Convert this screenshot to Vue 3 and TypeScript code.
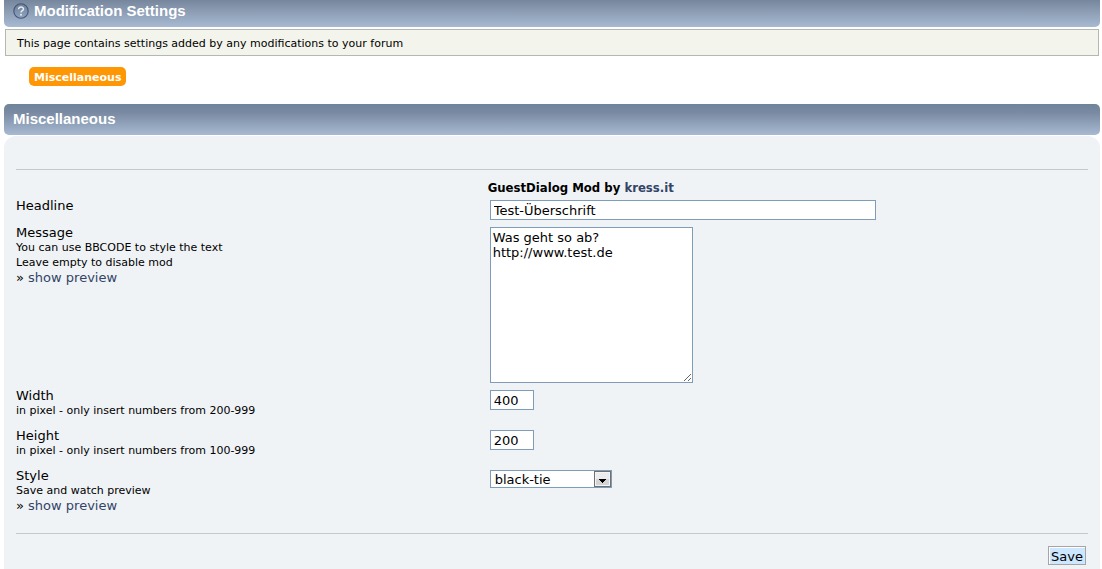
<script setup lang="ts">
import { ref } from 'vue'

const headline = ref('Test-Überschrift')
const message = ref('Was geht so ab?\nhttp://www.test.de')
const dialogWidth = ref('400')
const dialogHeight = ref('200')
const style = ref('black-tie')
const styles: string[] = ['black-tie', 'blitzer', 'cupertino', 'smoothness']
</script>

<template>
  <main class="page">
    <header class="bar bar-top">
      <a href="#help" class="help" aria-label="Help">
        <svg viewBox="0 0 16 16" width="16" height="16" aria-hidden="true">
          <defs>
            <linearGradient id="disc" x1="0" y1="0" x2="0" y2="1">
              <stop offset="0" stop-color="#6f8098" />
              <stop offset="1" stop-color="#8fa3be" />
            </linearGradient>
          </defs>
          <circle cx="8" cy="8" r="7.2" fill="url(#disc)" stroke="#40557a" stroke-width="1.1" />
          <path d="M5.6 6.2C5.6 3.3 10.5 3.4 10.5 6.1C10.5 7.8 8 7.7 8 9.6" fill="none" stroke="#e8edf4" stroke-width="1.5" />
          <circle cx="8" cy="11.8" r="1" fill="#e8edf4" />
        </svg>
      </a>
      <h1>Modification Settings</h1>
    </header>
    <p class="info">This page contains settings added by any modifications to your forum</p>
    <nav class="tabs"><a href="#misc" class="tab">Miscellaneous</a></nav>
    <header class="bar bar-section"><h2>Miscellaneous</h2></header>

    <form class="panel" @submit.prevent>
      <hr />
      <div class="fields">
        <p class="credit">GuestDialog Mod by <a href="#kress">kress.it</a></p>

        <div class="label"><label for="headline">Headline</label></div>
        <div class="control"><input id="headline" v-model="headline" type="text" class="wide" /></div>

        <div class="label">
          <label for="message">Message</label>
          <small>You can use BBCODE to style the text</small>
          <small>Leave empty to disable mod</small>
          <span>» <a href="#preview">show preview</a></span>
        </div>
        <div class="control"><textarea id="message" v-model="message"></textarea></div>

        <div class="label">
          <label for="width">Width</label>
          <small>in pixel - only insert numbers from 200-999</small>
        </div>
        <div class="control"><input id="width" v-model="dialogWidth" type="text" class="short" /></div>

        <div class="label">
          <label for="height">Height</label>
          <small>in pixel - only insert numbers from 100-999</small>
        </div>
        <div class="control"><input id="height" v-model="dialogHeight" type="text" class="short" /></div>

        <div class="label">
          <label for="style">Style</label>
          <small>Save and watch preview</small>
          <span>» <a href="#style-preview">show preview</a></span>
        </div>
        <div class="control">
          <div class="select">
            <select id="style" v-model="style">
              <option v-for="name in styles" :key="name" :value="name">{{ name }}</option>
            </select>
            <svg class="arrow" viewBox="0 0 17 16" width="17" height="16" shape-rendering="crispEdges" aria-hidden="true">
              <rect width="17" height="16" fill="#707070" />
              <rect x="1" y="1" width="15" height="14" fill="#f4f4f4" />
              <rect x="2" y="2" width="13" height="6" fill="#ececec" />
              <rect x="2" y="8" width="13" height="6" fill="#d4d4d4" />
              <path d="M5 8H12V9H11V10H10V11H9V12H8V11H7V10H6V9H5Z" fill="#000" />
            </svg>
          </div>
        </div>
      </div>
      <hr />
      <div class="actions"><button type="submit">Save</button></div>
    </form>
  </main>
</template>

<style>
body {
  background: #fff;
}
</style>

<style scoped>
* {
  box-sizing: border-box;
}
.page {
  display: flex;
  flex-direction: column;
  min-height: 100vh;
  padding: 0 2px 0 4px;
  font: 13px/15px Verdana, "DejaVu Sans", sans-serif;
  color: #000;
}
a {
  color: #334466;
  text-decoration: none;
}
p,
h1,
h2 {
  margin: 0;
}
.bar {
  display: flex;
  align-items: center;
  padding: 0 9px;
  background: linear-gradient(#6f8399, #7a8ba3 30%, #a8bad2);
  color: #fff;
}
.bar-top {
  height: 27px;
  padding-bottom: 5px;
  gap: 5px;
  border-radius: 0 0 5px 5px;
  background: linear-gradient(#76879d, #a8bad2);
}
.bar-section {
  height: 31px;
  padding-bottom: 1px;
  border-radius: 5px;
}
.bar h1,
.bar h2 {
  font: bold 15px/18px Arial, "Liberation Sans", sans-serif;
}
.help,
.help svg {
  display: block;
}
.info {
  margin: 2px 1px 0;
  padding: 6px 11px 4px;
  border: 1px solid #b5b8b0;
  background: #f3f4ec;
  font-size: 11px;
}
.tabs {
  display: flex;
  padding: 11px 25px 18px;
}
.tab {
  padding: 3px 5px 1px;
  border-radius: 5px;
  background: #ff9604;
  color: #fff;
  font-size: 11px;
  font-weight: bold;
}
.panel {
  flex: 1;
  margin-top: 1px;
  padding: 33px 12px 4px;
  border-radius: 12px 12px 0 0;
  background: #eff3f6;
}
hr {
  height: 1px;
  margin: 0;
  border: 0;
  background: #c4c9cf;
}
.fields {
  display: grid;
  grid-template-columns: 44% 1fr;
  row-gap: 3px;
  padding: 10px 0 13px;
}
.credit {
  grid-column: 2;
  font-family: "DejaVu Sans Condensed", "DejaVu Sans", sans-serif;
  font-weight: bold;
}
.label {
  display: flex;
  flex-direction: column;
  align-items: flex-start;
  padding-bottom: 7px;
}
.label small {
  padding-top: 1px;
  font-size: 11px;
  line-height: 14px;
}
.control {
  padding: 2px;
}
input,
textarea,
.select {
  display: block;
  border: 1px solid #7f9db9;
  border-radius: 0;
  background: #fff;
  color: #000;
  font: inherit;
}
input {
  height: 20px;
  padding: 0 3px;
}
.wide {
  width: 386px;
  max-width: 100%;
}
.short {
  width: 44px;
}
textarea {
  width: 203px;
  height: 156px;
  padding: 2px;
}
.select {
  position: relative;
  width: 122px;
  height: 18px;
}
select {
  display: block;
  width: 100%;
  height: 16px;
  padding: 0 20px 0 4px;
  border: 0;
  appearance: none;
  background: transparent;
  color: #000;
  font: inherit;
}
.arrow {
  position: absolute;
  top: 0;
  right: 0;
  pointer-events: none;
}
.actions {
  display: flex;
  justify-content: flex-end;
  padding: 12px 2px 0 0;
}
button {
  height: 19px;
  padding: 1px 2px 0;
  border: 1px solid #a5a5a5;
  border-radius: 0;
  background: #cde7ff;
  box-shadow: inset 1px 1px #fff;
  color: #000;
  font: inherit;
}
</style>
